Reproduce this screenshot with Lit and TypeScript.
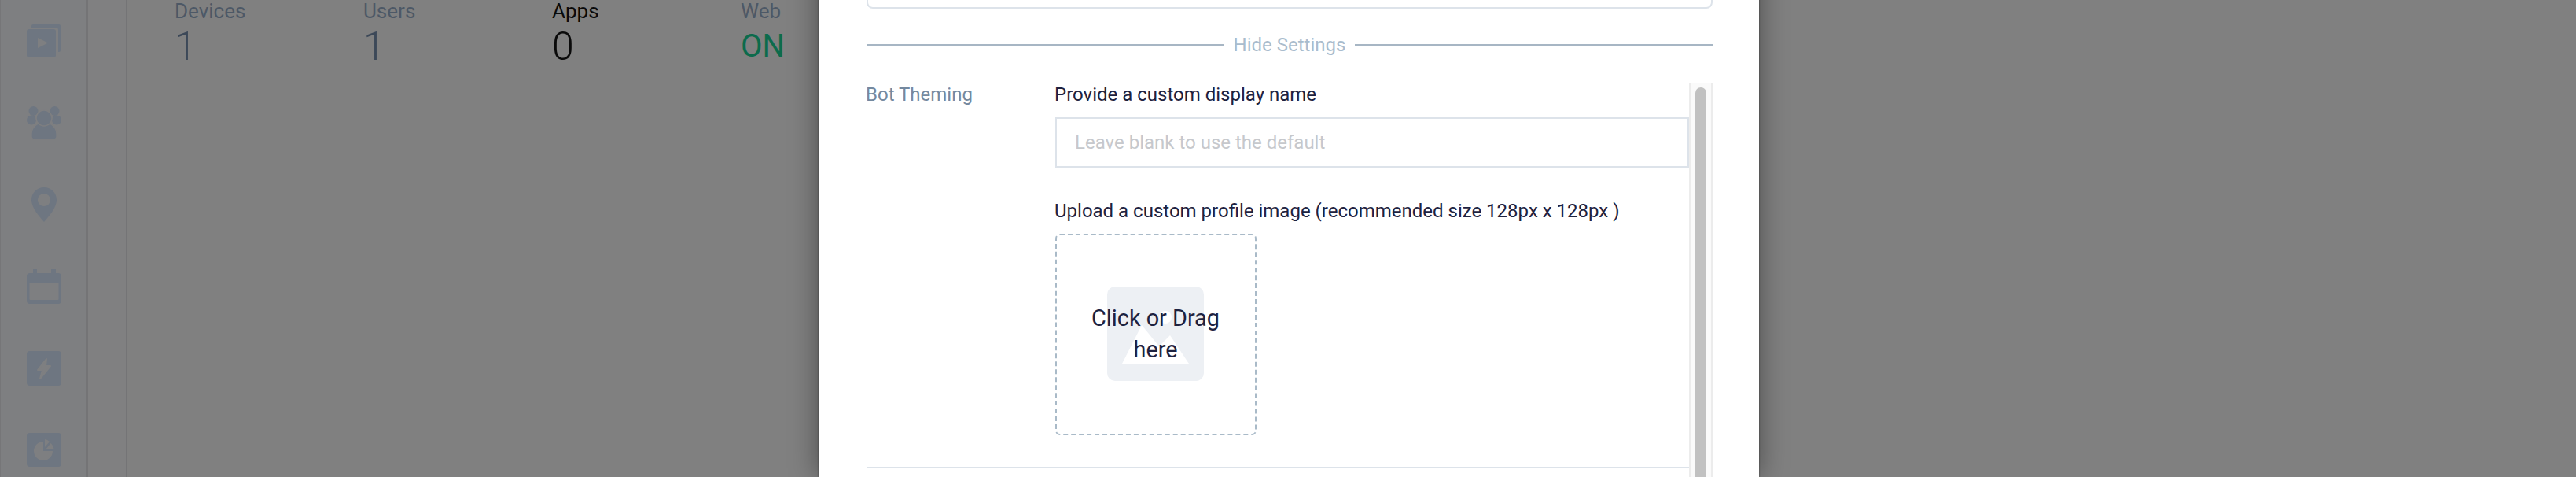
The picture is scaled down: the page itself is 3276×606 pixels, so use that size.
import { LitElement, html, css } from "lit";
import { customElement } from "lit/decorators.js";

const FILL = "#6e7681";
const BG = "#7e7f81";

@customElement("app-root")
export class AppRoot extends LitElement {
  static styles = css`
    :host { display: block; width: 3276px; height: 606px; position: relative; overflow: hidden; font-family: Roboto, "Liberation Sans", sans-serif; background: #808080; }
    .shell { display: flex; height: 606px; }
    .rail { width: 112px; box-sizing: border-box; background: #7e7f81; border-left: 1px solid #767678; border-right: 2px solid #747476; padding: 30px 0 0 33px; display: flex; flex-direction: column; gap: 60px; }
    .rail svg { width: 44px; height: 44px; display: block; flex: none; }
    .panel { width: 50px; box-sizing: border-box; background: #808081; border-right: 2px solid #747476; }
    .stats { display: flex; padding-left: 60px; flex: 1; align-items: flex-start; }
    .stat { width: 240px; color: #3c4858; }
    .stat .k { font-size: 26px; line-height: 28px; font-weight: 400; color: #4d5866; }
    .stat .v { font-size: 50px; line-height: 56px; font-weight: 300; margin-top: 3px; }
    .stat.active { color: #0a0a0a; }
    .stat.active .k { color: #0a0a0a; }
    .stat .on { color: #0c6b4c; font-size: 40px; font-weight: 400; }

    .overlay { position: absolute; inset: 0; display: flex; justify-content: center; padding-left: 2px; }
    .modal { width: 1196px; height: 646px; margin-top: -40px; flex: none; box-sizing: border-box; background: #fff; box-shadow: 0 0 2px rgba(0,0,0,.45), 0 0 34px rgba(0,0,0,.42); padding: 0 59px 0 61px; display: flex; flex-direction: column; }
    .top-input { height: 51px; box-sizing: border-box; border: 2px solid #dde3ea; border-radius: 8px; flex: none; }
    .divider { display: flex; align-items: center; gap: 12px; margin-top: 30px; height: 32px; color: #a9bccd; font-size: 24px; line-height: 32px; }
    .divider::before, .divider::after { content: ""; flex: 1; height: 2px; background: #a7b6c4; }
    .form { display: flex; flex: 1; margin-top: 32px; min-height: 0; }
    .main { flex: 1; min-width: 0; }
    .row { display: grid; grid-template-columns: 240px 1fr; }
    .side { font-size: 24px; line-height: 30px; color: #74899f; margin-left: -1px; }
    .lbl { font-size: 24px; line-height: 30px; color: #1d2240; margin-left: -1px; }
    .input { height: 64px; box-sizing: border-box; margin-top: 14px; border: 2px solid #dde3ea; padding: 0 23px; font-size: 24px; line-height: 60px; color: #c6c8cc; }
    .lbl.up { margin-top: 40px; }
    .drop { width: 256px; height: 256px; box-sizing: border-box; margin-top: 14px; border: 2px dashed #a9bac8; border-radius: 6px; display: grid; place-items: center; }
    .drop > * { grid-area: 1 / 1; }
    .drop svg { width: 123px; height: 120px; display: block; margin: 0 2px 2px 0; }
    .drop .txt { font-size: 28.800px; line-height: 40px; color: #1d2240; text-align: center; width: 190px; margin: 0 1px 2px 0; }
    .hr { height: 2px; background: #dde3ea; margin-top: 40px; }
    .bar { width: 30px; flex: none; box-sizing: border-box; background: #fafafa; border-left: 2px solid #ececec; border-right: 2px solid #ececec; padding: 6px 6px 0; }
    .thumb { height: 100%; background: #c1c1c1; border-radius: 8px 8px 0 0; }
  `;

  icons() {
    const f = FILL, b = BG;
    return [
      html`<svg viewBox="0 0 44 44"><path fill=${f} d="M6 5V3a2 2 0 0 1 2-2h33a2 2 0 0 1 2 2v31a2 2 0 0 1-2 2h-1V8a3 3 0 0 0-3-3z"/><rect x="0" y="7" width="37" height="36" rx="3" fill=${f}/><path fill=${b} d="M14 18v13l13-6.500z"/></svg>`,
      html`<svg viewBox="0 0 44 44"><g fill=${f}><circle cx="8.500" cy="7" r="6"/><circle cx="35.500" cy="7" r="6"/><circle cx="6" cy="18.500" r="6"/><circle cx="38" cy="18.500" r="6"/><path stroke=${b} stroke-width="1.500" d="M6 39.500V36a14 14 0 0 1 14-14h4a14 14 0 0 1 14 14v3.500a3.500 3.500 0 0 1-3.500 3.500H9.500A3.500 3.500 0 0 1 6 39.500z"/><circle cx="22" cy="16" r="10" stroke=${b} stroke-width="1.500"/></g></svg>`,
      html`<svg viewBox="0 0 44 44"><path fill=${f} fill-rule="evenodd" d="M22 0c9 0 16 7 16 16 0 10-10 21-16 28C16 37 6 26 6 16 6 7 13 0 22 0zm0 8a8 8 0 1 0 0 16 8 8 0 0 0 0-16z"/></svg>`,
      html`<svg viewBox="0 0 44 44"><path fill=${f} fill-rule="evenodd" d="M8 0h5v5h18V0h6v5h3a4 4 0 0 1 4 4v31a4 4 0 0 1-4 4H4a4 4 0 0 1-4-4V9a4 4 0 0 1 4-4h4zM3.500 18v20a1 1 0 0 0 1 1h35a1 1 0 0 0 1-1V18z"/></svg>`,
      html`<svg viewBox="0 0 44 44"><rect width="44" height="44" rx="4" fill=${f}/><path fill=${b} stroke=${b} stroke-width="2" stroke-linejoin="round" d="M25 10 14 24h6l-3 11 13-16h-6z"/></svg>`,
      html`<svg viewBox="0 0 44 44"><rect width="44" height="43" rx="4" fill=${f}/><path fill=${b} d="M21 11a12 12 0 1 0 12 12H21z"/><path fill=${b} d="M23 8a11 11 0 0 1 6 3l-6 7z"/><path fill=${b} d="M24 21l6.500-8a12 12 0 0 1 4 8z"/></svg>`,
    ];
  }

  render() {
    return html`
      <div class="shell">
        <div class="rail">${this.icons()}</div>
        <div class="panel"></div>
        <div class="stats">
          <div class="stat"><div class="k">Devices</div><div class="v">1</div></div>
          <div class="stat"><div class="k">Users</div><div class="v">1</div></div>
          <div class="stat active"><div class="k">Apps</div><div class="v">0</div></div>
          <div class="stat"><div class="k">Web</div><div class="v on">ON</div></div>
        </div>
      </div>
      <div class="overlay">
        <div class="modal">
          <div class="top-input"></div>
          <div class="divider">Hide Settings</div>
          <div class="form">
            <div class="main">
              <div class="row">
                <div class="side">Bot Theming</div>
                <div>
                  <div class="lbl">Provide a custom display name</div>
                  <div class="input">Leave blank to use the default</div>
                  <div class="lbl up">Upload a custom profile image (recommended size 128px x 128px )</div>
                  <div class="drop">
                    <svg viewBox="0 0 123 120"><rect width="123" height="120" rx="10" fill="#edf0f4"/><circle cx="74" cy="39" r="8" fill="#fff"/><path fill="#fff" d="M19 98 44 49 66 76 80 62 104 98z"/></svg>
                    <div class="txt">Click or Drag here</div>
                  </div>
                </div>
              </div>
              <div class="hr"></div>
            </div>
            <div class="bar"><div class="thumb"></div></div>
          </div>
        </div>
      </div>
    `;
  }
}
